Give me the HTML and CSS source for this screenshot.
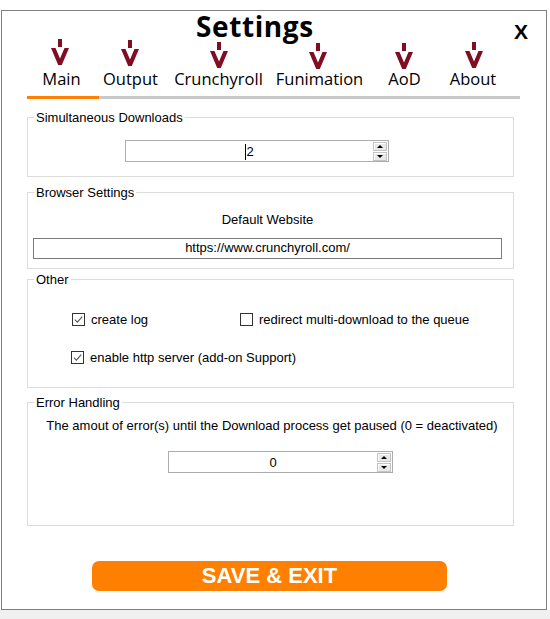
FILE: index.html
```html
<!DOCTYPE html>
<html>
<head>
<meta charset="utf-8">
<title>Settings</title>
<link rel="stylesheet" href="styles.css">
</head>
<body>
<div class="window">
  <header class="header">
    <h1 class="title">Settings</h1>
    <span class="close">X</span>
  </header>

  <nav class="tabs">
    <div class="tab tab--active tab--main">
      <span class="tab-icon"><svg class="arrow" width="20" height="26" viewBox="0 0 20 26"><rect x="8" y="0" width="4" height="8"/><polygon points="1,9 5.5,9 10,19.5 14.5,9 19,9 11.8,26 8.2,26"/></svg></span>
      <span class="tab-label">Main</span>
    </div>
    <div class="tab tab--output">
      <span class="tab-icon"><svg class="arrow" width="20" height="26" viewBox="0 0 20 26"><rect x="8" y="0" width="4" height="8"/><polygon points="1,9 5.5,9 10,19.5 14.5,9 19,9 11.8,26 8.2,26"/></svg></span>
      <span class="tab-label">Output</span>
    </div>
    <div class="tab tab--crunchy">
      <span class="tab-icon"><svg class="arrow" width="20" height="26" viewBox="0 0 20 26"><rect x="8" y="0" width="4" height="8"/><polygon points="1,9 5.5,9 10,19.5 14.5,9 19,9 11.8,26 8.2,26"/></svg></span>
      <span class="tab-label">Crunchyroll</span>
    </div>
    <div class="tab tab--funi">
      <span class="tab-icon"><svg class="arrow" width="20" height="26" viewBox="0 0 20 26"><rect x="8" y="0" width="4" height="8"/><polygon points="1,9 5.5,9 10,19.5 14.5,9 19,9 11.8,26 8.2,26"/></svg></span>
      <span class="tab-label">Funimation</span>
    </div>
    <div class="tab tab--aod">
      <span class="tab-icon"><svg class="arrow" width="20" height="26" viewBox="0 0 20 26"><rect x="8" y="0" width="4" height="8"/><polygon points="1,9 5.5,9 10,19.5 14.5,9 19,9 11.8,26 8.2,26"/></svg></span>
      <span class="tab-label">AoD</span>
    </div>
    <div class="tab tab--about">
      <span class="tab-icon"><svg class="arrow" width="20" height="26" viewBox="0 0 20 26"><rect x="8" y="0" width="4" height="8"/><polygon points="1,9 5.5,9 10,19.5 14.5,9 19,9 11.8,26 8.2,26"/></svg></span>
      <span class="tab-label">About</span>
    </div>
  </nav>

  <fieldset class="group group--downloads">
    <legend>Simultaneous Downloads</legend>
    <div class="spin spin--downloads">
      <span class="spin-value"><span class="caret"></span>2</span>
      <span class="spin-btns">
        <span class="spin-btn"><span class="tri tri--up"></span></span>
        <span class="spin-btn"><span class="tri tri--down"></span></span>
      </span>
    </div>
  </fieldset>

  <fieldset class="group group--browser">
    <legend>Browser Settings</legend>
    <div class="caption caption--browser">Default Website</div>
    <div class="text-input">https://www.crunchyroll.com/</div>
  </fieldset>

  <fieldset class="group group--other">
    <legend>Other</legend>
    <div class="check-row">
      <label class="check-item check-item--first">
        <svg class="check" width="13" height="13" viewBox="0 0 13 13"><rect x="0.5" y="0.5" width="12" height="12" fill="#fff" stroke="#333"/><path d="M2.8 6.6 L5.4 9.1 L10.2 3.6" fill="none" stroke="#555" stroke-width="1.1"/></svg>
        <span>create log</span>
      </label>
      <label class="check-item">
        <svg class="check" width="13" height="13" viewBox="0 0 13 13"><rect x="0.5" y="0.5" width="12" height="12" fill="#fff" stroke="#333"/></svg>
        <span>redirect multi-download to the queue</span>
      </label>
    </div>
    <div class="check-row check-row--second">
      <label class="check-item">
        <svg class="check" width="13" height="13" viewBox="0 0 13 13"><rect x="0.5" y="0.5" width="12" height="12" fill="#fff" stroke="#333"/><path d="M2.8 6.6 L5.4 9.1 L10.2 3.6" fill="none" stroke="#555" stroke-width="1.1"/></svg>
        <span>enable http server (add-on Support)</span>
      </label>
    </div>
  </fieldset>

  <fieldset class="group group--errors">
    <legend>Error Handling</legend>
    <div class="caption caption--errors">The amout of error(s) until the Download process get paused (0 = deactivated)</div>
    <div class="spin spin--errors">
      <span class="spin-value">0</span>
      <span class="spin-btns">
        <span class="spin-btn"><span class="tri tri--up"></span></span>
        <span class="spin-btn"><span class="tri tri--down"></span></span>
      </span>
    </div>
  </fieldset>

  <button class="save-btn" type="button">SAVE &amp; EXIT</button>
</div>
</body>
</html>
```

FILE: styles.css
```css
html {
  background: #f0f0f0;
}

body {
  margin: 0;
  height: 610px;
  padding-top: 10px;
  box-sizing: border-box;
  background: #fff;
  font-family: "Liberation Sans", Arial, sans-serif;
  font-size: 13px;
  color: #000;
}

.window {
  width: 546px;
  height: 600px;
  margin-left: 1px;
  box-sizing: border-box;
  border: 1px solid #808080;
  background: #fff;
  padding: 0 25px;
}

/* header */
.header {
  display: flex;
  height: 28px;
  padding-top: 2px;
  box-sizing: border-box;
}

.title {
  margin: 0 0 0 169px;
  font-family: "Open Sans", sans-serif;
  font-weight: 700;
  font-size: 28px;
  letter-spacing: 0.6px;
  line-height: 27px;
  height: 26px;
  white-space: nowrap;
}

.close {
  margin-left: auto;
  margin-right: -7px;
  margin-top: 6px;
  font-family: "Liberation Sans", Arial, sans-serif;
  font-weight: 700;
  font-size: 21px;
  line-height: 26px;
  height: 26px;
}

/* tabs */
.tabs {
  display: flex;
  width: 493px;
  border-bottom: 3px solid #c8c8c8;
}

.tab {
  display: flex;
  flex-direction: column;
  align-items: center;
  padding-bottom: 7px;
  box-sizing: border-box;
}

.tab--active {
  border-bottom: 3px solid #ff7f00;
  margin-bottom: -3px;
}

.tab-icon {
  display: block;
  height: 30px;
}

.arrow {
  display: block;
  fill: #800d22;
}

.tab-label {
  font-family: "Open Sans", sans-serif;
  font-size: 16.5px;
  line-height: 20px;
  white-space: nowrap;
}

.tab--main { width: 72px; padding-right: 3px; }
.tab--main .arrow { margin-left: -4px; }
.tab--output { width: 64px; padding-right: 1px; }
.tab--output .arrow { margin-top: 1px; margin-left: -2px; }
.tab--crunchy { width: 111px; }
.tab--crunchy .arrow { margin-top: 2.5px; }
.tab--funi { width: 91px; }
.tab--funi .arrow { margin-top: 3.5px; margin-left: -3px; }
.tab--aod { width: 79px; }
.tab--aod .arrow { margin-top: 3.5px; margin-left: -2px; }
.tab--about { width: 58px; }
.tab--about .arrow { margin-top: 3px; margin-left: 2px; }

/* groups */
.group {
  width: 487px;
  box-sizing: border-box;
  margin: 0;
  padding: 0;
  border: 1px solid #dcdcdc;
  min-width: 0;
}

.group legend {
  margin-left: 6px;
  padding: 0 2px;
  line-height: 15px;
  font-size: 13px;
}

.group--downloads {
  margin-top: 11px;
  padding-top: 15px;
  padding-bottom: 14px;
}

.group--browser {
  margin-top: 8px;
  padding-top: 12px;
  padding-bottom: 9px;
}

.group--other {
  margin-top: 3px;
  padding-top: 25px;
  padding-bottom: 22px;
}

.group--errors {
  margin-top: 7px;
  padding-top: 8px;
  padding-bottom: 52px;
}

.caption {
  line-height: 15px;
  text-align: center;
}

.caption--browser {
  margin: 0 11px 0 5px;
}

.caption--errors {
  margin-left: 3px;
}

/* spinner */
.spin {
  display: flex;
  height: 22px;
  box-sizing: border-box;
  border: 1px solid #acacac;
  background: #fff;
}

.spin--downloads {
  width: 264px;
  margin-left: 97px;
}

.spin--errors {
  width: 225px;
  margin-top: 18px;
  margin-left: 140px;
}

.spin-value {
  flex: 1;
  display: flex;
  align-items: center;
  justify-content: center;
  line-height: 15px;
  padding-top: 1px;
}

.caret {
  display: inline-block;
  width: 1px;
  height: 16px;
  background: #000;
}

.spin-btns {
  display: flex;
  flex-direction: column;
  gap: 1px;
  padding: 1px 1px 0 0;
  width: 14px;
}

.spin-btn {
  height: 9px;
  box-sizing: border-box;
  border: 1px solid #c4c4c4;
  background: #e8e8e8;
  box-shadow: inset 1px 1px 0 #fff;
  display: flex;
  align-items: center;
  justify-content: center;
}

.tri {
  width: 0;
  height: 0;
  border-left: 3px solid transparent;
  border-right: 3px solid transparent;
}

.tri--up { border-bottom: 3px solid #000; }
.tri--down { border-top: 3px solid #000; }

/* text input */
.text-input {
  margin: 11px 11px 0 5px;
  height: 21px;
  box-sizing: border-box;
  border: 1px solid #7a7a7a;
  text-align: center;
  line-height: 18px;
}

/* checkboxes */
.check-row {
  display: flex;
  height: 15px;
  line-height: 15px;
  padding-left: 43px;
}

.check-row--second {
  margin-top: 23px;
}

.check-item {
  display: flex;
  align-items: center;
  gap: 6px;
  white-space: nowrap;
}

.check-item--first {
  width: 169px;
  padding-left: 1px;
  box-sizing: border-box;
}

.check {
  display: block;
  flex: none;
}

/* save button */
.save-btn {
  display: block;
  margin: 35px 0 0 65px;
  width: 355px;
  height: 30px;
  padding: 0;
  border: none;
  border-radius: 7px;
  background: #ff8000;
  color: #fff;
  font-family: "Liberation Sans", Arial, sans-serif;
  font-weight: 700;
  font-size: 22px;
  line-height: 30px;
  text-align: center;
}
```
